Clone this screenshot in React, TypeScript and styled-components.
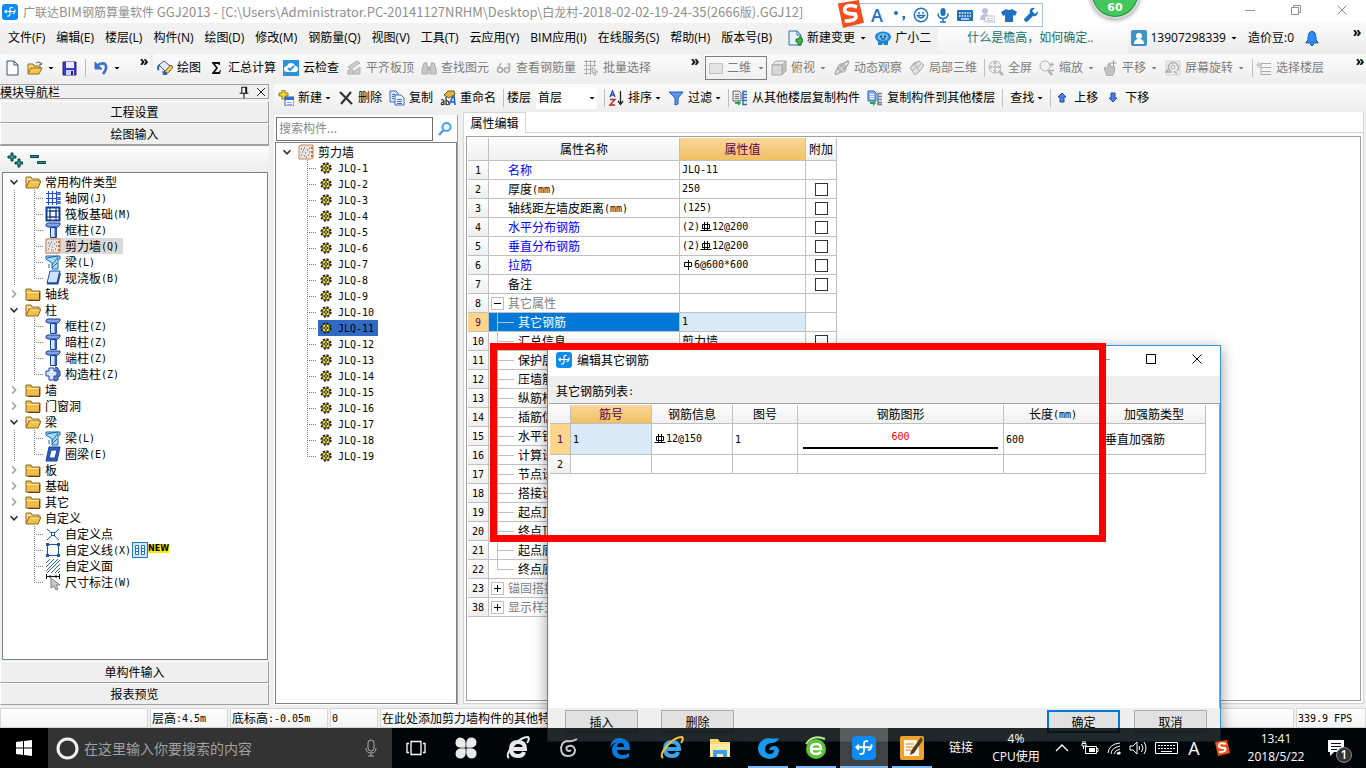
import React from "react";
import styled, { createGlobalStyle, css } from "styled-components";

const UI_FONT = '"Open Sans", "Noto Sans CJK SC", sans-serif';
const SONG_FONT = '"Noto Sans CJK SC", "Liberation Sans", sans-serif';
const LINE = "#c0c0c0";
const EDGE = "#a0a0a0";

const GlobalStyle = createGlobalStyle`
  * { box-sizing: border-box; }
  html, body { margin: 0; height: 100%; background: #000; }
  body { font: 12px/16px ${UI_FONT}; color: #000; overflow: hidden; }
  button, input, select { font: inherit; color: inherit; margin: 0; }
  button { border: 0; padding: 0; background: none; white-space: nowrap; cursor: default; }
  svg { display: block; flex: none; }
`;

/* ---------- icons ---------- */

const shapes: Record<string, React.ReactNode> = {
  doc: <path d="M3 1h7l4 4v10H3z M10 1v4h4" fill="#fff" stroke="#3b5578" />,
  open: (
    <g>
      <path d="M1 13V4h5l1 2h6v3" fill="#f5d67b" stroke="#8a6a1f" />
      <path d="M1 14l3-6h11l-3 6z" fill="#fbc84c" stroke="#8a6a1f" />
      <path d="M9 3q3-2 5 0v2m0 0l-2-1m2 1l1-2" fill="none" stroke="#55697f" />
    </g>
  ),
  save: (
    <g>
      <path d="M1 2h13v13H1z" fill="#3a3ac4" stroke="#24248c" />
      <path d="M4 2h8v6H4z" fill="#e9efff" />
      <path d="M4 10h8v5H4z" fill="#c8d2f0" />
      <path d="M9 11h2v4H9z" fill="#24248c" />
    </g>
  ),
  undo: (
    <g fill="none" stroke="#3c6fd0">
      <path d="M4 6q4-4 8-2 3 4-2 10" strokeWidth="2.600" />
      <path d="M2 2v7h7z" fill="#3c6fd0" />
    </g>
  ),
  paint: (
    <g>
      <path d="M2 5l5-4 6 5-5 5z" fill="#e8eef7" stroke="#33527c" />
      <path d="M2 5q-2 4 0 5" fill="none" stroke="#2f62b4" strokeWidth="2" />
      <path d="M6 13l3 1 3-2 4-5-2-2-5 5z" fill="#f3c95a" stroke="#7a5a1a" />
      <path d="M5 11l5 1v3H6z" fill="#2f62b4" />
    </g>
  ),
  sigma: <path d="M4 2h8v3h-1l-1-1H7l3 4-3 4h4l1-2h1l-1 4H4v-1l4-5-4-5z" fill="#111" />,
  cloud: (
    <g>
      <path d="M0 0h16v16H0z" fill="#2b93dd" />
      <path d="M4 12q-3 0-3-3t3-3q1-3 4-3t4 3q3 0 3 3t-3 3z" fill="#fff" />
      <path d="M5 8l2 2 4-4" fill="none" stroke="#2b93dd" strokeWidth="2" />
    </g>
  ),
  plate: (
    <g fill="#cdcdcd" stroke="#adadad">
      <path d="M2 7l9-6 3 2-9 6z" />
      <path d="M2 10h5v4H2z M7 12l7-5v7H7z" />
    </g>
  ),
  binocular: (
    <g fill="#c8c8c8" stroke="#aaaaaa">
      <path d="M3 3h3v3l1 3v5H1V9z M10 3h3l2 6v5H9V9l1-3z M7 7h2v3H7z" />
    </g>
  ),
  glasses: (
    <g fill="none" stroke="#adadad" strokeWidth="1.500">
      <circle cx="4" cy="10" r="2.500" />
      <circle cx="11" cy="10" r="2.500" />
      <path d="M6.500 10h2M2 9l3-6M13.500 10V4h-2" />
    </g>
  ),
  batch: (
    <g fill="none" stroke="#adadad">
      <path d="M1 1.500h12M1 5.500h12M1 9.500h7M1 13.500h7M3.500 0v15M7.500 0v15M11.500 0v7" />
      <path d="M9 7l6 5h-3l1 3-2 0-1-3-1 1z" fill="#ddd" />
    </g>
  ),
  cube: (
    <g stroke="#a9a9a9">
      <path d="M1 5l4-4h10l-4 4z" fill="#e8e8e8" />
      <path d="M11 5l4-4v10l-4 4z" fill="#c4c4c4" />
      <path d="M1 5h10v10H1z" fill="#d8d8d8" />
    </g>
  ),
  planet: (
    <g>
      <circle cx="8" cy="8" r="5" fill="#c2c2c2" />
      <path d="M1 14Q3 6 14 1q2 2-4 8T1 14" fill="none" stroke="#ababab" strokeWidth="1.500" />
      <path d="M5 6l4 5" stroke="#e3e3e3" />
    </g>
  ),
  part3d: (
    <g fill="#e2e2e2" stroke="#adadad">
      <path d="M1 8l4-5 5-2 5 4-4 6-5 4z" />
      <path d="M5 3l5 8M1 8l9-7M3 11l9-7" fill="none" />
    </g>
  ),
  full: (
    <g fill="none" stroke="#b2b2b2">
      <circle cx="7" cy="7" r="6" fill="#f1f1f1" />
      <path d="M7 2v10M2 7h10M5.500 4L7 2l1.500 2M5.500 10L7 12l1.500-2M4 5.500L2 7l2 1.500M10 5.500L12 7l-2 1.500" />
      <path d="M11 11l4 4" strokeWidth="2.500" />
    </g>
  ),
  zoom: (
    <g fill="none" stroke="#b2b2b2">
      <circle cx="6" cy="6" r="5" fill="#f1f1f1" />
      <path d="M9 10l4 5" strokeWidth="2.500" />
      <path d="M11 4.500h4M13 2.500v4M11 10.500h4" strokeWidth="1.500" />
    </g>
  ),
  hand: (
    <g>
      <path d="M2 8l2-1 2 2V4l2-1 1 4 3-1 1 2-1 5-2 3H5z" fill="#c2c2c2" stroke="#aaa" />
      <path d="M11.500 0v6M8.500 3h6" stroke="#999" />
    </g>
  ),
  rotate: (
    <g fill="none" stroke="#b0b0b0">
      <path d="M1 1h14v14H1z" fill="#ededed" stroke="#d2d2d2" />
      <path d="M4 10a5 5 0 1 1 8 1M1 12l3-3 2 3zM12 14l-3-3" strokeWidth="1.500" />
      <circle cx="8" cy="7" r="2" />
    </g>
  ),
  floors: <path d="M5 3.500h10M5 7.500h10M5 11.500h10M5 14.500h10M1 5h5M3.500 2L1 5l2.500 3M5 3v12" fill="none" stroke="#ababab" />,
  add: (
    <g>
      <path d="M4 0h3v3h3v3H7v3H4V6H1V3h3z" fill="#f7d53c" stroke="#8f7412" />
      <path d="M7 7h9v9H7z" fill="#fff" stroke="#2b5fb5" />
      <path d="M7 7h9v3H7z" fill="#2b6fd6" />
      <path d="M9 12.500h5M9 14.500h5" stroke="#7ea9e4" />
    </g>
  ),
  del: <path d="M2 2l12 12M13 2L3 14" stroke="#333" strokeWidth="2.200" fill="none" />,
  copy: (
    <g stroke="#3a6fb7">
      <path d="M1 1h6l2 2v9H1z" fill="#dce9fb" />
      <path d="M6 5h6l3 3v7H6z" fill="#eef5ff" />
      <path d="M8 9.500h5M8 11.500h5M8 13.500h5M3 4.500h3M3 6.500h2M3 8.500h2" />
    </g>
  ),
  rename: (
    <g>
      <path d="M4 5l4-4h6l1 4-6 3z" fill="#e2b23c" stroke="#75591a" />
      <path d="M1 10q3-1 3 1v4M4 12q-3 0-3 2t3 0M6 7v8M6 11q3-1 3 2t-3 1" fill="none" stroke="#111" />
      <path d="M9 15l4-9h1l1 9M10 12h4" fill="none" stroke="#1f5fc4" strokeWidth="1.600" />
    </g>
  ),
  sort: (
    <g fill="none">
      <path d="M2 7l2.500-6L7 7M3 5h3" stroke="#2451b0" strokeWidth="1.400" />
      <path d="M2 9.500h5L2 15h5" stroke="#b02a2a" strokeWidth="1.400" />
      <path d="M12.500 1v13M10 11l2.500 3.500L15 11" stroke="#222" strokeWidth="1.300" />
    </g>
  ),
  funnel: <path d="M1 2h14L10 8v6l-3 1V8z" fill="#5b94ea" stroke="#2a5cb4" />,
  from: (
    <g>
      <path d="M1 1h6l2 2v8H1z" fill="#e8e8e8" stroke="#666" />
      <path d="M3 4.500h4M3 6.500h4M3 8.500h4" stroke="#777" />
      <path d="M15 1.500h-4v13h4M11 4.500h4M11 7.500h4M11 10.500h4" fill="none" stroke="#2b6bbd" strokeWidth="1.500" />
      <path d="M3 12h3v-2l3 3-3 3v-2H3z" fill="#28a745" />
    </g>
  ),
  to: (
    <g>
      <path d="M1 1h6l2 2v8H1z" fill="#8fb4f5" stroke="#2b5fb5" />
      <path d="M3 4.500h4M3 6.500h4M3 8.500h4" stroke="#fff" />
      <path d="M15 3.500h-4v11h4M11 6.500h4M11 9.500h4M11 12.500h4" fill="none" stroke="#6a7f99" strokeWidth="1.500" />
      <path d="M3 12h3v-2l3 3-3 3v-2H3z" fill="#28a745" />
    </g>
  ),
  up: <path d="M8 3l4 4H10v5H6V7H4z" fill="#4d7fe6" stroke="#1f48a8" />,
  down: <path d="M8 12l4-4H10V3H6v5H4z" fill="#4d7fe6" stroke="#1f48a8" />,
  change: (
    <g>
      <path d="M2 1h8l4 4v10H2z" fill="#e6f3fb" stroke="#2476a8" />
      <path d="M10 1v4h4" fill="none" stroke="#2476a8" />
      <path d="M9 9h3V7h2v2h2v3h-2v3h-3v-3H9z" fill="#4bb548" stroke="#1d7a1f" />
    </g>
  ),
  robot: (
    <g>
      <path d="M3 9h10v6H9l-1-2-1 2H3z" fill="#1c83d6" />
      <ellipse cx="8" cy="7" rx="8" ry="5.500" fill="#1c83d6" />
      <ellipse cx="8" cy="7" rx="5.500" ry="3.800" fill="#6cc0f5" />
      <circle cx="6" cy="6.500" r="1" fill="#134" />
      <circle cx="10" cy="6.500" r="1" fill="#134" />
      <path d="M6 8.500q2 1.500 4 0" stroke="#134" fill="none" />
    </g>
  ),
  user: (
    <g>
      <rect width="16" height="16" rx="2" fill="#3d94c9" />
      <circle cx="8" cy="6" r="3" fill="#fff" />
      <path d="M3 14q0-5 5-5t5 5z" fill="#fff" />
    </g>
  ),
  bell: (
    <g fill="#2e8df0" stroke="#1b62b5">
      <path d="M8 1q-4 1-4 6v3l-2 2v1h12v-1l-2-2V7q0-5-4-6z" />
      <path d="M6 14h4l-2 2z" />
    </g>
  ),
  folderOpen: (
    <g>
      <path d="M1 13V3h5l1 2h7v3" fill="#f6dc8d" stroke="#8c6a1b" />
      <path d="M1 14l3-7h12l-3 7z" fill="#f3bf45" stroke="#8c6a1b" />
      <path d="M5 8h9" stroke="#fff0bd" />
    </g>
  ),
  folder: (
    <g>
      <path d="M1 14V3h5l1 2h8v9z" fill="#f0bd4a" stroke="#8c6a1b" />
      <path d="M2 6.500h12" stroke="#fff0bd" />
      <path d="M14.500 6v8.500H3" stroke="#5e4510" fill="none" />
    </g>
  ),
  axis: <path d="M1 3.500h11M1 8.500h11M1 12.500h11M3.500 1v14M7.500 1v14M11.500 1v14M13 2.500h2v2h-2zM13 7.500h2v2h-2zM13 11.500h2v2h-2z" stroke="#2a4fc0" strokeWidth="1.200" fill="none" />,
  raft: (
    <g fill="none" stroke="#123f8c">
      <path d="M1.500 1.500h13v13h-13z" strokeWidth="2" />
      <path d="M5 5h6v6H5z" strokeWidth="1.500" />
      <path d="M5 1v4M11 1v4M5 11v4M11 11v4M1 5h4M1 11h4M11 5h4M11 11h4" />
    </g>
  ),
  column: (
    <g stroke="#1c3c94">
      <path d="M1 2l2-1h12v2l-2 2H3L1 4z" fill="#7ea4ec" />
      <path d="M5.500 5.500h6v10h-6z" fill="#d6e4ff" />
      <path d="M10.500 6v9" stroke="#2b5fd0" strokeWidth="2" />
    </g>
  ),
  wall: (
    <g>
      <path d="M1 2l2-1h12v13l-2 1H1z" fill="#e9e4e0" stroke="#c98562" />
      <path d="M3 5h1M6 4h1M9 6h1M4 8h1M7 9h1M11 4h1M3 11h1M6 12h1M10 11h1M11 8h1M8 13h1M5 6h1" stroke="#555" />
      <path d="M14 3v11" stroke="#d06a2c" strokeWidth="2" strokeDasharray="2 2" />
    </g>
  ),
  beam: (
    <g stroke="#1766b0">
      <path d="M1 2h14v3h-2v10H7V9L1 5z" fill="#a9dcfa" />
      <path d="M2 4l11-2M7 11l6-8M7 14l5-5M4 10v4" fill="none" />
    </g>
  ),
  slab: (
    <g>
      <path d="M5 1h10l-3 12H2z" fill="#cfe2ff" stroke="#1c4ba5" />
      <path d="M2 13.500h10.500L15 3" fill="none" stroke="#1c4ba5" strokeWidth="2" />
    </g>
  ),
  cross: (
    <g stroke="#1b3f96">
      <path d="M10 1l3 1v2l2 1v5l-2 1v3l-4 1" fill="#5b83d8" />
      <path d="M4 2h5v3h3v5H9v4H4v-4H1V5h3z" fill="#dbe7fd" />
    </g>
  ),
  ring: (
    <g stroke="#173f9c">
      <path d="M4 1h11l-3 14H1z" fill="#2d60c8" />
      <path d="M6 4h6l-2 8H4z" fill="#fff" />
    </g>
  ),
  point: (
    <g stroke="#1b55a5" fill="none">
      <path d="M2 3l12 11M14 3L2 14" />
      <rect x="6.500" y="6.500" width="3" height="3" fill="#fff" />
    </g>
  ),
  line: (
    <g stroke="#1b55a5" fill="#fff">
      <path d="M2.500 2.500h11v11h-11z" />
      <path d="M1 1h3v3H1zM12 1h3v3h-3zM1 12h3v3H1zM12 12h3v3h-3z" fill="#1b55a5" stroke="none" />
    </g>
  ),
  area: <path d="M1 5l4-4M1 9l8-8M1 13l12-12M2 15L15 2M6 15l9-9M10 15l5-5M13 15l2-2" stroke="#2a62b8" fill="none" />,
  dims: (
    <g>
      <path d="M1.500 0v5M14.500 0v5M1 2.500h14M5 1v3M11 1v3" stroke="#111" fill="none" />
      <path d="M6 4l9 7h-4l2 4-2 1-2-4-3 2z" fill="#c9c9c9" stroke="#808080" />
    </g>
  ),
  twin: (
    <g>
      <path d="M0.500 0.500h15v15h-15z" fill="#cfe8fd" stroke="#2572bd" />
      <path d="M3.500 3.500h3v9h-3zM9.500 3.500h3v9h-3z" fill="#fff" stroke="#2572bd" />
      <path d="M3 6.500h4M3 9.500h4M9 6.500h4M9 9.500h4" stroke="#2572bd" />
    </g>
  ),
  gear: (
    <g>
      <circle cx="8" cy="8" r="4.500" fill="none" stroke="#222" strokeWidth="2.400" strokeDasharray="2 1.530" />
      <circle cx="8" cy="8" r="4" fill="#f2e60a" stroke="#333" strokeWidth="0.800" />
      <path d="M8 4v8M4 8h8" stroke="#222" strokeWidth="0.800" />
      <circle cx="8" cy="8" r="1.400" fill="#fff" stroke="#222" />
    </g>
  ),
  lens: (
    <g fill="none" stroke="#4aa3e6">
      <circle cx="9.500" cy="6" r="4" strokeWidth="2" fill="#e9f5ff" />
      <path d="M6.500 9L2 14" strokeWidth="2.500" />
    </g>
  ),
  glodon: (
    <g>
      <rect width="16" height="16" rx="3" fill="#0d8bf2" />
      <path d="M8 10V5q0-1.800 2.200-1.500M2.800 7.500h9.400q1.200 0 .8-1.500M2.800 7.500l1.500-1.300M2.800 7.500l1.500 1.300M12.500 7.500q.2 1.800-1.500 1.700M8 9.500q0 3-2.500 2.500" fill="none" stroke="#fff" strokeWidth="1.200" strokeLinecap="round" />
    </g>
  ),
  pin: <path d="M5.500 2v7M5 2.500h6M10 2v7M11 2v7M3 9.500h10M8 10v5" stroke="#111" strokeWidth="1.200" fill="none" />,
  close: <path d="M3.500 3.500l9 9M12.500 3.500l-9 9" stroke="currentColor" fill="none" />,
  minimize: <path d="M3 8.500h10" stroke="#999" fill="none" />,
  maximize: <path d="M3.500 3.500h9v9h-9z" stroke="currentColor" fill="none" />,
  restore: <path d="M3.500 5.500h7v7h-7zM5.500 5V3.500h7v7H11" stroke="currentColor" fill="none" />,
  expandAll: <path d="M4 1h2v3h3v2H6v3H4V6H1V4h3z M11 7h2v3h3v2h-3v3h-2v-3H8v-2h3z" stroke="#0a3c38" fill="#1aa79b" />,
  collapseAll: <path d="M0.500 3.500h8v2h-8z M7.500 9.500h8v2h-8z" stroke="#0a3c38" fill="#1aa79b" />,
  down2: <path d="M4 6l4 4 4-4" stroke="#333" strokeWidth="2" fill="none" />,
  right2: <path d="M6 4l4 4-4 4" stroke="#999" strokeWidth="1.600" fill="none" />,
  sogou: (
    <g>
      <path d="M1 2l12-2 3 13-12 3z" fill="#f1501c" />
      <path d="M12 4Q6 2 5 5t6 3q2 4-6 4" fill="none" stroke="#fff" strokeWidth="2" />
    </g>
  ),
  smile: (
    <g fill="none" stroke="#2070c0" strokeWidth="1.400">
      <circle cx="8" cy="8" r="6.700" />
      <path d="M4.500 8.500q3.500 5 7 0zM6 5v2M10 5v2" />
    </g>
  ),
  mic: (
    <g>
      <rect x="5.500" y="1" width="5" height="8" rx="2.500" fill="#2070c0" />
      <path d="M3 6.500q0 5 5 5t5-5M8 11v4M5 15h6" fill="none" stroke="#2070c0" strokeWidth="1.500" />
    </g>
  ),
  keys: (
    <g>
      <rect x="0" y="3" width="16" height="11" rx="1" fill="#2070c0" />
      <path d="M2 6h12M2 9h12" stroke="#fff" strokeWidth="1.500" strokeDasharray="1.500 1.200" />
      <path d="M4 12h8" stroke="#fff" strokeWidth="1.300" />
    </g>
  ),
  card: (
    <g fill="#b9c2d6">
      <circle cx="6" cy="4" r="3" />
      <path d="M1 13q0-6 5-6 3 0 4 2v4z" />
      <path d="M6 9h10v6H6z" fill="#fff" stroke="#b9c2d6" />
      <path d="M8 11.500h3M12 11.500h2M8 13.500h6" stroke="#b9c2d6" />
    </g>
  ),
  shirt: <path d="M5 2q3 2 6 0l5 3-2 4-2-1v7H4V8L2 9 0 5z" fill="#2070c0" />,
  wrench: <path d="M15 4l-3 3-3-3 3-3q-4-1-5 2-1 2 0 3L1 12q0 3 3 3l6-6q5 1 5-5z" fill="#2070c0" />,
  punct: (
    <g fill="#2070c0">
      <circle cx="5" cy="6" r="2" />
      <path d="M11 9h3q1 4-3 5 2-2 0-5z" />
    </g>
  ),
};

const Icon = ({ name, size = 16 }: { name: string; size?: number }) => (
  <svg width={size} height={size} viewBox="0 0 16 16" aria-hidden="true">
    {shapes[name]}
  </svg>
);

const splitLatin = (text: string, Part: React.ElementType) =>
  text.split(/([\x20-\x7e]+)/).map((part, i) => (i % 2 ? <Part key={i}>{part}</Part> : part));

/* Latin runs keep the half-width rhythm of the grid font. */
const Latin = styled.span`
  font-family: "DejaVu Sans Mono", monospace;
  font-size: 10px;
  line-height: 10px;
  vertical-align: 1px;
  white-space: pre;
`;

const Song = ({ children }: { children: string }) => <>{splitLatin(children, Latin)}</>;

/* ---------- window frame ---------- */

const Window = styled.div`
  position: relative;
  display: flex;
  flex-direction: column;
  height: 100vh;
  overflow: hidden;
`;

const TitleBar = styled.header`
  display: flex;
  align-items: center;
  flex: none;
  height: 23px;
  padding: 0 16px 0 2px;
  background: #fff;
  color: #8f8f8f;
  font-family: "Noto Sans CJK SC", sans-serif;
`;

const TitleText = styled.h1`
  flex: 1;
  margin: 0 0 0 5px;
  font-size: 12px;
  font-weight: 400;
  line-height: 20px;
  white-space: nowrap;
`;

const TitleLatin = styled.span`
  font-size: 13px;
  line-height: 16px;
`;

const WindowButtons = styled.div`
  display: flex;
  gap: 30px;
  padding-bottom: 3px;
`;

const MenuBar = styled.nav`
  display: flex;
  align-items: center;
  flex: none;
  height: 30px;
  padding-left: 8px;
  background: linear-gradient(#f2f2f2, #efefef);
`;

const MenuList = styled.div`
  display: flex;
  gap: 11px;
`;

const MenuExtras = styled.div`
  display: flex;
  align-items: center;
  gap: 8px;
  margin-left: 15px;
`;

const News = styled.a`
  flex: 1;
  align-self: stretch;
  padding-left: 29px;
  margin-left: 7px;
  background: linear-gradient(#fff, #f2f2f2);
  color: #1a6f6b;
  line-height: 30px;
  text-decoration: none;
  white-space: nowrap;
`;

const Account = styled.div`
  display: flex;
  align-items: center;
  align-self: stretch;
  gap: 10px;
  padding: 0 3px;
  background: linear-gradient(#fafafa, #ececec);
`;

const MoreButton = styled.button<{ $far?: boolean }>`
  align-self: flex-start;
  width: 12px;
  margin-left: ${(p) => (p.$far ? "21px" : "auto")};
  padding-top: ${(p) => (p.$far ? 2 : 0)}px;
  font-size: 14px;
  font-weight: 700;
  line-height: 14px;
`;
const More = ({ far }: { far?: boolean }) => <MoreButton $far={far}>»</MoreButton>;

const Caret = styled.i<{ $wide?: boolean }>`
  flex: none;
  width: 6px;
  height: 3px;
  margin: ${(p) => (p.$wide ? "0 1px 0 5px" : "0 0 0 3px")};
  background: currentColor;
  clip-path: polygon(0 0, 100% 0, 50% 100%);
`;

const Strip = styled.div`
  display: flex;
  flex: none;
  gap: 3px;
  height: 31px;
  padding: 1px 0 2px;
  background: #efefef;
`;

const ToolGroup = styled.div<{ $basis?: number; $pad?: number }>`
  display: flex;
  align-items: center;
  gap: 7px;
  height: 28px;
  padding-left: ${(p) => p.$pad ?? 4}px;
  flex: ${(p) => (p.$basis ? `0 0 ${p.$basis}px` : "1 0 0")};
  min-width: 0;
  border-radius: 3px;
  background: linear-gradient(#fbfbfb, #eeeeee);
`;

const ToolButton = styled.button<{ $dim?: boolean; $bare?: boolean }>`
  display: flex;
  align-items: center;
  height: 22px;
  padding-left: ${(p) => (p.$bare ? 4 : 0)}px;
  color: ${(p) => (p.$dim ? "#7c7c7c" : "#000")};
  & > svg + span { margin-left: 4px; }
`;

const Rule = styled.i<{ $wide?: boolean }>`
  flex: none;
  width: 1px;
  height: 18px;
  margin-right: ${(p) => (p.$wide ? 0 : -4)}px;
  background: #bdbdbd;
`;

type ToolProps = { icon?: string; label?: string; caret?: boolean; wide?: boolean; dim?: boolean; title?: string };
const Tool = ({ icon, label, caret, wide, dim, title }: ToolProps) => (
  <ToolButton $dim={dim} $bare={!icon} aria-label={label ?? title}>
    {icon && <Icon name={icon} />}
    {label && <span>{label}</span>}
    {caret && <Caret $wide={wide} />}
  </ToolButton>
);

const selectBase = css`
  appearance: none;
  border: 0;
  border-radius: 0;
  height: 22px;
  line-height: 16px;
  outline: 0;
`;

const ViewPicker = styled.label`
  display: flex;
  align-items: center;
  width: 62px;
  height: 24px;
  margin-right: -3px;
  padding-left: 3px;
  border: 1px solid #7d7d7d;
  color: #7c7c7c;
`;

const ViewSwatch = styled.i`
  flex: none;
  width: 14px;
  height: 11px;
  margin-right: 4px;
  border: 1px solid #c4c4c4;
  background: #e4e4e4;
`;

const ViewSelect = styled.select`
  ${selectBase}
  width: 28px;
  padding: 0;
  background: none;
`;

const FloorPicker = styled.label`
  display: flex;
  align-items: center;
  gap: 5px;
`;

const FloorBox = styled.span`
  display: flex;
  align-items: center;
  width: 61px;
  height: 22px;
  padding-right: 2px;
  background: #fff;
`;

const FloorSelect = styled.select`
  ${selectBase}
  flex: 1;
  min-width: 0;
  padding: 0 2px;
  background: none;
`;

/* ---------- navigation column ---------- */

const Body = styled.main`
  display: flex;
  flex: 1;
  min-height: 0;
  background: #efefef;
`;

const NavColumn = styled.aside`
  display: flex;
  flex-direction: column;
  flex: 0 0 269px;
  font-family: ${SONG_FONT};
`;

const NavHead = styled.div`
  display: flex;
  align-items: center;
  gap: 3px;
  height: 15px;
  margin-bottom: 2px;
  border: 1px solid ${EDGE};
  border-left: 0;
  h2 {
    flex: 1;
    margin: 0;
    font-size: 12px;
    font-weight: 400;
    line-height: 14px;
  }
`;

const NavButton = styled.button`
  height: 22px;
  border: 1px solid ${EDGE};
  border-top-color: #fff;
  border-left-color: #fff;
  line-height: 20px;
  background: #efefef;
`;

const NavTools = styled.div`
  display: flex;
  gap: 7px;
  height: 27px;
  padding: 6px 7px;
  border-top: 1px solid ${EDGE};
  background: linear-gradient(#fdfdfd, #ededed);
`;

const NavTree = styled.ul`
  flex: 1;
  margin: 0 1px 1px 2px;
  padding: 1px 0;
  border: 1px solid #7f8189;
  background: #fff;
  list-style: none;
`;

const dotsV = (x: number, h: string) =>
  `repeating-linear-gradient(to bottom, #808080 0 1px, transparent 1px 2px) ${x}px 0 / 1px ${h} no-repeat`;
const dotsH = (x: number, w: number) =>
  `repeating-linear-gradient(to right, #808080 0 1px, transparent 1px 2px) ${x}px 8px / ${w}px 1px no-repeat`;

const TreeRow = styled.li`
  display: flex;
  align-items: center;
  height: 16px;
  line-height: 16px;
  white-space: nowrap;
`;

const Rail = styled.span<{ $line?: boolean }>`
  display: flex;
  align-items: center;
  justify-content: center;
  flex: 0 0 22px;
  height: 16px;
  background: ${(p) => (p.$line ? dotsV(11, "16px") : "none")};
`;

const Branch = styled.span<{ $last?: boolean; $w: number }>`
  flex: 0 0 ${(p) => p.$w}px;
  height: 16px;
  background: ${(p) => dotsV(9, p.$last ? "8px" : "16px")}, ${(p) => dotsH(9, p.$w - 10)};
`;

const TreeHit = styled.span<{ $tone?: string }>`
  display: flex;
  align-items: center;
  background: ${(p) => p.$tone ?? "none"};
`;

const TreeLabel = styled.span<{ $tight?: boolean }>`
  padding: 0 ${(p) => (p.$tight ? 1 : 4)}px 0 4px;
`;

const NewTag = styled.b`
  margin-bottom: 4px;
  background: #ffe800;
  font: 700 8px/9px "DejaVu Sans", sans-serif;
`;

type Leaf = { icon: string; text: string; active?: boolean; fresh?: boolean };
type Group = { text: string; items?: Leaf[] };
const groups: Group[] = [
  {
    text: "常用构件类型",
    items: [
      { icon: "axis", text: "轴网(J)" },
      { icon: "raft", text: "筏板基础(M)" },
      { icon: "column", text: "框柱(Z)" },
      { icon: "wall", text: "剪力墙(Q)", active: true },
      { icon: "beam", text: "梁(L)" },
      { icon: "slab", text: "现浇板(B)" },
    ],
  },
  { text: "轴线" },
  {
    text: "柱",
    items: [
      { icon: "column", text: "框柱(Z)" },
      { icon: "column", text: "暗柱(Z)" },
      { icon: "column", text: "端柱(Z)" },
      { icon: "cross", text: "构造柱(Z)" },
    ],
  },
  { text: "墙" },
  { text: "门窗洞" },
  {
    text: "梁",
    items: [
      { icon: "beam", text: "梁(L)" },
      { icon: "ring", text: "圈梁(E)" },
    ],
  },
  { text: "板" },
  { text: "基础" },
  { text: "其它" },
  {
    text: "自定义",
    items: [
      { icon: "point", text: "自定义点" },
      { icon: "line", text: "自定义线(X)", fresh: true },
      { icon: "area", text: "自定义面" },
      { icon: "dims", text: "尺寸标注(W)" },
    ],
  },
];

/* ---------- workspace ---------- */

const Workspace = styled.section`
  display: flex;
  flex-direction: column;
  flex: 1;
  min-width: 0;
  margin-left: 5px;
`;

const Panes = styled.div`
  display: flex;
  flex: 1;
  min-height: 0;
  gap: 5px;
`;

const ListPane = styled.div`
  display: flex;
  flex-direction: column;
  flex: 0 0 184px;
  margin-top: 3px;
  padding-left: 1px;
  border-right: 1px solid ${EDGE};
  background: #fff;
  font-family: ${SONG_FONT};
`;

const SearchRow = styled.form`
  display: flex;
  align-items: center;
  gap: 4px;
  height: 27px;
  padding-left: 1px;
`;

const SearchInput = styled.input`
  width: 157px;
  height: 24px;
  padding: 0 2px 2px;
  border: 1px solid #707070;
  border-radius: 0;
  background: #fff;
  &::placeholder { color: #8a8a8a; opacity: 1; }
`;

const ListTree = styled.ul`
  flex: 1;
  margin: 0 0 1px;
  padding: 1px 0;
  border: 1px solid #7f8189;
  list-style: none;
`;

const PropPane = styled.div`
  display: flex;
  flex-direction: column;
  flex: 1;
  min-width: 0;
  margin: 0 2px 1px 0;
  border: 1px solid #d4d4d4;
  border-top: 0;
  background: #fff;
  font-family: ${SONG_FONT};
`;

const TabLine = styled.div`
  display: flex;
  height: 21px;
  &::after {
    content: "";
    flex: 1;
    border-bottom: 1px solid #d4d4d4;
  }
`;

const Tab = styled.button`
  width: 62px;
  border: 1px solid #d4d4d4;
  border-width: 1px 1px 0 0;
  line-height: 18px;
`;

const GridBox = styled.div`
  flex: 1;
  min-height: 0;
  margin: 3px 2px 2px;
  padding: 1px;
  border: 1px solid ${EDGE};
  overflow: hidden;
`;

const Grid = styled.table`
  border-collapse: separate;
  border-spacing: 0;
  table-layout: fixed;
  width: 0;
  font-family: ${SONG_FONT};
  font-size: 12px;
  line-height: 16px;
`;

const cell = css`
  padding: 0 2px;
  border: solid ${LINE};
  border-width: 0 1px 1px 0;
  font-weight: 400;
  white-space: nowrap;
  overflow: hidden;
`;

const ColHead = styled.th<{ $hot?: boolean; $h: number }>`
  ${cell}
  height: ${(p) => p.$h}px;
  text-align: center;
  background: ${(p) => (p.$hot ? "linear-gradient(#f9d79b, #f1c062)" : "linear-gradient(#fdfdfd, #f0f0f0)")};
  color: ${(p) => (p.$hot ? "#5a0050" : "#000")};
`;

const RowHead = styled.th<{ $hot?: boolean; $h?: number }>`
  ${cell}
  height: ${(p) => p.$h ?? 19}px;
  padding: 0;
  text-align: center;
  background: ${(p) => (p.$hot ? "#ffd58c" : "linear-gradient(#fdfdfd, #efefef)")};
  color: ${(p) => (p.$hot ? "#5a0050" : "#000")};
`;

const Cell = styled.td<{ $tone?: string; $center?: boolean }>`
  ${cell}
  background: ${(p) => p.$tone ?? "#fff"};
  text-align: ${(p) => (p.$center ? "center" : "left")};
`;

const NameCell = styled(Cell)<{ $ink?: string }>`
  padding: 0;
  color: ${(p) => p.$ink ?? "#000"};
`;

const NameInner = styled.div`
  display: flex;
  align-items: center;
  height: 18px;
`;

const NameLead = styled.span<{ $kind?: "branch" | "end" | "box" }>`
  display: flex;
  align-items: center;
  flex: 0 0 ${(p) => (p.$kind === "branch" || p.$kind === "end" ? 29 : 19)}px;
  height: 18px;
  padding-left: 2px;
  ${(p) =>
    (p.$kind === "branch" || p.$kind === "end") &&
    css`
      background: linear-gradient(${LINE}, ${LINE}) 8px 0 / 1px ${p.$kind === "end" ? 9 : 18}px no-repeat,
        linear-gradient(${LINE}, ${LINE}) 8px 9px / 17px 1px no-repeat;
    `}
`;

const Toggle = styled.button`
  width: 13px;
  height: 13px;
  border: 1px solid ${LINE};
  background: linear-gradient(#000, #000) 2px 5px / 7px 1px no-repeat, #fff;
  &[aria-expanded="false"] {
    background: linear-gradient(#000, #000) 2px 5px / 7px 1px no-repeat,
      linear-gradient(#000, #000) 5px 2px / 1px 7px no-repeat, #fff;
  }
`;

const Tick = styled.input`
  appearance: none;
  display: block;
  width: 13px;
  height: 13px;
  margin: 0 auto;
  border: 1px solid #333;
  background: #fff;
`;

const ValueLine = styled.span`
  display: flex;
  align-items: center;
`;

const Rebar = ({ grade = 3 }: { grade?: number }) => (
  <svg width="12" height="12" viewBox="0 0 12 12" role="img" aria-label="钢筋">
    <g fill="none" stroke="#000">
      {grade === 3 ? (
        <path d="M2.500 3.500h7v4h-7zM4.500 1v9M7.500 1v9M0.500 9.500h11" />
      ) : (
        <path d="M2.500 3.500h7v4h-7zM6.500 1v10" />
      )}
    </g>
  </svg>
);

type Prop = {
  n: number;
  name: string;
  value?: string;
  bar?: number;
  tail?: string;
  tick?: boolean;
  kind?: "branch" | "end" | "box";
  open?: boolean;
  ink?: string;
  selected?: boolean;
};
const BLUE = "#0000ff";
const GREY = "#808080";
const props: Prop[] = [
  { n: 1, name: "名称", value: "JLQ-11", ink: BLUE },
  { n: 2, name: "厚度(mm)", value: "250", tick: true },
  { n: 3, name: "轴线距左墙皮距离(mm)", value: "(125)", tick: true },
  { n: 4, name: "水平分布钢筋", value: "(2)", bar: 3, tail: "12@200", tick: true, ink: BLUE },
  { n: 5, name: "垂直分布钢筋", value: "(2)", bar: 3, tail: "12@200", tick: true, ink: BLUE },
  { n: 6, name: "拉筋", bar: 1, tail: "6@600*600", tick: true, ink: BLUE },
  { n: 7, name: "备注", tick: true },
  { n: 8, name: "其它属性", kind: "box", open: true, ink: GREY },
  { n: 9, name: "其它钢筋", value: "1", kind: "branch", selected: true, ink: "#fff" },
  { n: 10, name: "汇总信息", value: "剪力墙", kind: "branch", tick: true },
  { n: 11, name: "保护层", kind: "branch", tick: true },
  { n: 12, name: "压墙筋", kind: "branch", tick: true },
  { n: 13, name: "纵筋构", kind: "branch", tick: true },
  { n: 14, name: "插筋信", kind: "branch", tick: true },
  { n: 15, name: "水平钢", kind: "branch", tick: true },
  { n: 16, name: "计算设", kind: "branch" },
  { n: 17, name: "节点设", kind: "branch" },
  { n: 18, name: "搭接设", kind: "branch" },
  { n: 19, name: "起点顶", kind: "branch", tick: true },
  { n: 20, name: "终点顶", kind: "branch", tick: true },
  { n: 21, name: "起点底", kind: "branch", tick: true },
  { n: 22, name: "终点底", kind: "end", tick: true },
  { n: 23, name: "锚固搭接", kind: "box", open: false, ink: GREY },
  { n: 38, name: "显示样式", kind: "box", open: false, ink: GREY },
];

const PropertyTable = () => (
  <Grid>
    <colgroup>
      {[21, 191, 126, 31].map((w) => (
        <col key={w} style={{ width: w }} />
      ))}
    </colgroup>
    <thead>
      <tr>
        <ColHead $h={23} />
        <ColHead $h={23}>属性名称</ColHead>
        <ColHead $h={23} $hot>属性值</ColHead>
        <ColHead $h={23}>附加</ColHead>
      </tr>
    </thead>
    <tbody>
      {props.map((p) => (
        <tr key={p.n}>
          <RowHead $hot={p.selected}>
            <Song>{String(p.n)}</Song>
          </RowHead>
          <NameCell $ink={p.ink} $tone={p.selected ? "#0078d7" : undefined}>
            <NameInner>
              <NameLead $kind={p.kind}>
                {p.kind === "box" && <Toggle aria-label={p.name} aria-expanded={p.open} />}
              </NameLead>
              <span>
                <Song>{p.name}</Song>
              </span>
            </NameInner>
          </NameCell>
          <Cell $tone={p.selected ? "#d8e9f8" : undefined}>
            <ValueLine>
              {p.value && <Song>{p.value}</Song>}
              {p.bar && <Rebar grade={p.bar} />}
              {p.tail && <Song>{p.tail}</Song>}
            </ValueLine>
          </Cell>
          <Cell $center>{p.tick && <Tick type="checkbox" aria-label={`${p.name} 附加`} />}</Cell>
        </tr>
      ))}
    </tbody>
  </Grid>
);

/* ---------- dialog ---------- */

const Dialog = styled.section`
  position: absolute;
  left: 547px;
  top: 345px;
  z-index: 1;
  display: flex;
  flex-direction: column;
  width: 674px;
  height: 397px;
  border: 1px solid #3a90e5;
  background: #efefef;
  box-shadow: 0 4px 14px rgba(0, 0, 0, 0.4);
  font-family: ${SONG_FONT};
`;

const DialogHead = styled.header`
  display: flex;
  align-items: center;
  height: 30px;
  padding: 0 15px 2px 8px;
  background: #fff;
  h2 {
    flex: 1;
    margin: 0 0 0 5px;
    font-size: 12px;
    font-weight: 400;
  }
`;

const DialogLabel = styled.p`
  height: 27px;
  margin: 0;
  padding-left: 8px;
  line-height: 30px;
`;

const DialogGrid = styled.div`
  flex: 1;
  padding: 1px;
  margin-left: 1px;
  border: 1px solid ${EDGE};
  border-width: 1px 1px 0 0;
  background: #fff;
`;

const BarShape = styled.div`
  display: flex;
  flex-direction: column;
  align-items: stretch;
  height: 30px;
  padding: 4px 3px 0;
  color: #f00;
  line-height: 16px;
  text-align: center;
  &::after {
    content: "";
    height: 2px;
    margin-top: 3px;
    background: #000;
  }
`;

const DialogFoot = styled.footer`
  display: flex;
  justify-content: space-between;
  height: 33px;
  padding: 2px 13px 0 17px;
`;

const ButtonPair = styled.div<{ $gap: number }>`
  display: flex;
  gap: ${(p) => p.$gap}px;
`;

const DialogButton = styled.button<{ $main?: boolean }>`
  width: 73px;
  height: 23px;
  border: ${(p) => (p.$main ? "2px solid #0078d7" : "1px solid #adadad")};
  background: #e1e1e1;
  line-height: 19px;
`;

const RedFrame = styled.div`
  position: absolute;
  left: 490px;
  top: 343px;
  z-index: 2;
  width: 616px;
  height: 199px;
  border: 7px solid #f00;
  pointer-events: none;
`;

/* ---------- status and task bars ---------- */

const StatusBar = styled.footer`
  display: flex;
  flex: none;
  gap: 2px;
  height: 23px;
  padding-top: 3px;
  background: #efefef;
  font-family: ${SONG_FONT};
`;

const StatusCell = styled.span<{ $w?: number }>`
  flex: ${(p) => (p.$w ? `0 0 ${p.$w}px` : "1 1 0")};
  min-width: 0;
  height: 20px;
  padding-left: 1px;
  border: 1px solid #d6d6d6;
  background: linear-gradient(#fff, #f3f3f3);
  line-height: 18px;
  white-space: nowrap;
  overflow: hidden;
`;

const TaskBar = styled.footer`
  position: relative;
  z-index: 3;
  display: flex;
  flex: none;
  height: 40px;
  background: rgba(0, 6, 8, 0.86);
  color: #fff;
`;

const TaskItem = styled.button<{ $w: number; $run?: boolean; $active?: boolean }>`
  display: flex;
  align-items: center;
  justify-content: center;
  flex: 0 0 ${(p) => p.$w}px;
  color: #fff;
  background: ${(p) => (p.$active ? "rgba(255,255,255,.25)" : "none")};
  ${(p) =>
    p.$run &&
    css`
      background-image: linear-gradient(#76b9ff, #76b9ff);
      background-repeat: no-repeat;
      background-position: 50% 100%;
      background-size: ${p.$active ? 48 : 40}px 2px;
    `}
`;

const StartButton = styled(TaskItem)`
  background: #000;
`;

const TaskSearch = styled.label`
  display: flex;
  align-items: center;
  flex: 0 0 344px;
  padding: 0 13px 0 8px;
  background: #333;
`;

const TaskInput = styled.input`
  flex: 1;
  min-width: 0;
  margin-left: 5px;
  padding: 0;
  border: 0;
  background: none;
  font-family: "Noto Sans CJK SC", sans-serif;
  font-size: 14px;
  &::placeholder { color: #a0a0a0; opacity: 1; }
`;

const Tray = styled.div`
  display: flex;
  margin-left: auto;
  padding-right: 8px;
`;

const TrayText = styled.span<{ $w: number }>`
  display: flex;
  flex-direction: column;
  align-items: center;
  justify-content: center;
  width: ${(p) => p.$w}px;
  line-height: 18px;
  white-space: nowrap;
`;

const TrayLetter = styled.span`
  font-size: 18px;
`;

const Notice = styled.span`
  position: relative;
`;

const NoticeCount = styled.b`
  position: absolute;
  left: 9px;
  top: 8px;
  width: 16px;
  height: 16px;
  border: 1px solid #888;
  border-radius: 8px;
  background: #333;
  font: 600 12px/14px ${UI_FONT};
`;

/* ---------- floating widgets ---------- */

const ImeBar = styled.div`
  position: absolute;
  left: 850px;
  top: 3px;
  z-index: 2;
  display: flex;
  align-items: center;
  gap: 6px;
  width: 193px;
  height: 24px;
  padding-left: 18px;
  border: 1px solid #a9c1dc;
  background: #fff;
  color: #2070c0;
`;

const ImeLogo = styled.span`
  position: absolute;
  left: -15px;
  top: -4px;
`;

const ImeLetter = styled.b`
  width: 16px;
  font: 600 18px/20px "Open Sans", sans-serif;
  text-align: center;
`;

const Ball = styled.div`
  position: absolute;
  left: 1090px;
  top: -31px;
  z-index: 2;
  width: 50px;
  height: 50px;
  padding-top: 30px;
  border: 2px solid #d7d7d7;
  border-radius: 25px;
  background: #43c65a;
  box-shadow: inset 0 0 0 1px #1d8f35, 0 1px 4px rgba(0, 0, 0, 0.4);
  color: #fff;
  font: 700 11px/13px "DejaVu Sans", sans-serif;
  text-align: center;
`;

const menus = [
  "文件(F)", "编辑(E)", "楼层(L)", "构件(N)", "绘图(D)", "修改(M)", "钢筋量(Q)", "视图(V)",
  "工具(T)", "云应用(Y)", "BIM应用(I)", "在线服务(S)", "帮助(H)", "版本号(B)",
];

const windowTitle =
  "广联达BIM钢筋算量软件 GGJ2013 - [C:\\Users\\Administrator.PC-20141127NRHM\\Desktop\\白龙村-2018-02-02-19-24-35(2666版).GGJ12]";

const taskSvg = {
  win: (
    <svg width="16" height="16" viewBox="0 0 16 16">
      <path d="M0 2l7-1v6.500H0zM8 1l8-1v7.500H8zM0 8.500h7V15l-7-1zM8 8.500h8V16l-8-1z" fill="#fff" />
    </svg>
  ),
  ring: (
    <svg width="23" height="23" viewBox="0 0 23 23">
      <circle cx="11.500" cy="11.500" r="9.500" fill="none" stroke="#f2f2f2" strokeWidth="3" />
    </svg>
  ),
  mic: (
    <svg width="16" height="18" viewBox="0 0 16 18">
      <path d="M8 1q3 0 3 3v5q0 3-3 3t-3-3V4q0-3 3-3zM3 9q0 5 5 5t5-5M8 14v3M5 17h6" fill="none" stroke="#aaa" />
    </svg>
  ),
  view: (
    <svg width="20" height="16" viewBox="0 0 20 16">
      <path d="M5 1.500h10v13H5zM3 3.500H1v9h2M17 3.500h2v9h-2" fill="none" stroke="#fff" strokeWidth="1.300" />
    </svg>
  ),
  fan: (
    <svg width="24" height="24" viewBox="0 0 24 24" fill="#e9e9e9">
      {[0, 90, 180, 270].map((a) => (
        <path key={a} d="M11.500 11.500Q3 13 1.500 8 1 2 6 1.500q7 0 5.500 10z" transform={`rotate(${a} 12 12)`} />
      ))}
    </svg>
  ),
  e: (color: string, swoosh: string) => (
    <svg width="26" height="26" viewBox="0 0 26 26" fill="none">
      <path d="M7 14h13q0-7-7-7t-7 7q0 7 7 7 5 0 6-4" stroke={color} strokeWidth="4" />
      <path d="M4 23Q0 20 8 11T23 2q2 2-1 6" stroke={swoosh} strokeWidth="2" />
    </svg>
  ),
  g: (color: string, w: number) => (
    <svg width="26" height="26" viewBox="0 0 26 26" fill="none" stroke={color} strokeWidth={w}>
      <path d="M22 4q-5 3-9 2-6 0-7 7 0 8 7 8 7 0 7-6-1-5-6-4-4 1-2 4 2 2 4 0" />
    </svg>
  ),
  gBlue: (
    <svg width="26" height="26" viewBox="0 0 26 26">
      <path d="M24 3q-2 5-8 5-6 1-6 6 0 5 5 5 4 0 4-4h-5q1-4 6-4 4 1 4 5-1 8-10 8-10-1-11-10Q3 5 13 3q6 1 11 0z" fill="#159af0" />
    </svg>
  ),
  edge: (
    <svg width="24" height="24" viewBox="0 0 24 24">
      <path d="M2 11Q4 1 13 2q9 1 9 12H9q0 5 6 5 4 0 6-2v4q-3 2-8 2-9-1-9-9 0-5 5-8-4 1-7 5zm7 0h7q0-4-3-4-4 0-4 4z" fill="#0a78dc" />
    </svg>
  ),
  files: (
    <svg width="24" height="22" viewBox="0 0 24 22">
      <path d="M2 2h8l2 3h10v15H2z" fill="#f7d774" />
      <path d="M2 7h20v13H2z" fill="#fde9a3" />
      <path d="M5 20v-7h14v7h-4v-3H9v3z" fill="#3aa0e0" />
    </svg>
  ),
  green: (
    <svg width="26" height="26" viewBox="0 0 26 26" fill="none">
      <circle cx="13" cy="14" r="10" fill="#5cc43a" />
      <path d="M8 14h10q0-5-5-5t-5 5q0 5 5 5 3 0 5-2" stroke="#fff" strokeWidth="2.500" />
      <path d="M3 9Q10-1 22 4" stroke="#b9f08e" strokeWidth="2" />
    </svg>
  ),
  note: (
    <svg width="26" height="26" viewBox="0 0 26 26">
      <rect x="1" y="1" width="24" height="24" rx="2" fill="#f0a32a" />
      <path d="M5 5h12l3 3v13H5z" fill="#fff8e4" />
      <path d="M7 9h8M7 12h8M7 15h5" stroke="#c58a2a" />
      <path d="M22 2l2 3-9 13-4 2 1-4z" fill="#5a3a12" />
    </svg>
  ),
  chevron: (
    <svg width="14" height="10" viewBox="0 0 14 10">
      <path d="M1 8l6-6 6 6" fill="none" stroke="#fff" strokeWidth="1.300" />
    </svg>
  ),
  battery: (
    <svg width="18" height="16" viewBox="0 0 18 16">
      <path d="M4.500 6.500h11v7h-11zM16 8.500h1v3h-1M2.500 9V6M1 3.500h4V6H1zM2 1v3M4 1v3" fill="none" stroke="#fff" />
      <path d="M8 8h6v4H8z" fill="#fff" />
    </svg>
  ),
  wifi: (
    <svg width="16" height="16" viewBox="0 0 16 16" fill="none" stroke="#fff">
      <path d="M2 13Q3 4 14 3M5 14q0-6 9-8M8 14q1-4 6-5" />
      <path d="M11 14q0-2 3-2v2z" fill="#fff" />
    </svg>
  ),
  sound: (
    <svg width="18" height="14" viewBox="0 0 18 14" fill="none" stroke="#fff">
      <path d="M1 5h3l4-4v12L4 9H1zM10 5q1 2 0 4M12.500 3q3 4 0 8M15 1q4 6 0 12" />
    </svg>
  ),
  keyboard: (
    <svg width="23" height="14" viewBox="0 0 23 14" fill="none" stroke="#fff">
      <path d="M0.500 1.500h22v11h-22z" />
      <path d="M3 4.500h17M3 7.500h17" strokeDasharray="2 1" />
      <path d="M6 10.500h11" />
    </svg>
  ),
  notice: (
    <svg width="18" height="18" viewBox="0 0 18 18">
      <path d="M1 1h16v12H7l-4 4v-4H1z" fill="#fff" />
      <path d="M4 4.500h10M4 7.500h10M4 10.500h6" stroke="#111" />
    </svg>
  ),
};

const dialogColumns = [
  { id: "row", w: 21 },
  { id: "no", w: 81 },
  { id: "info", w: 81 },
  { id: "figure", w: 65 },
  { id: "shape", w: 206 },
  { id: "length", w: 99 },
  { id: "type", w: 103 },
];

const DialogTable = () => (
  <Grid>
    <colgroup>
      {dialogColumns.map((c) => (
        <col key={c.id} style={{ width: c.w }} />
      ))}
    </colgroup>
    <thead>
      <tr>
        <ColHead $h={19} />
        <ColHead $h={19} $hot>筋号</ColHead>
        <ColHead $h={19}>钢筋信息</ColHead>
        <ColHead $h={19}>图号</ColHead>
        <ColHead $h={19}>钢筋图形</ColHead>
        <ColHead $h={19}><Song>长度(mm)</Song></ColHead>
        <ColHead $h={19}>加强筋类型</ColHead>
      </tr>
    </thead>
    <tbody>
      <tr>
        <RowHead $hot $h={31}><Song>1</Song></RowHead>
        <Cell $tone="#d8e9f8"><Song>1</Song></Cell>
        <Cell>
          <ValueLine>
            <Rebar />
            <Song>12@150</Song>
          </ValueLine>
        </Cell>
        <Cell><Song>1</Song></Cell>
        <Cell>
          <BarShape><span><Song>600</Song></span></BarShape>
        </Cell>
        <Cell><Song>600</Song></Cell>
        <Cell>垂直加强筋</Cell>
      </tr>
      <tr>
        <RowHead><Song>2</Song></RowHead>
        <Cell /><Cell /><Cell /><Cell /><Cell /><Cell />
      </tr>
    </tbody>
  </Grid>
);

export default function App() {
  return (
    <>
      <GlobalStyle />
      <Window>
        <TitleBar>
          <Icon name="glodon" />
          <TitleText>{splitLatin(windowTitle, TitleLatin)}</TitleText>
          <WindowButtons>
            <button aria-label="最小化"><Icon name="minimize" /></button>
            <button aria-label="还原"><Icon name="restore" /></button>
            <button aria-label="关闭"><Icon name="close" /></button>
          </WindowButtons>
        </TitleBar>

        <MenuBar>
          <MenuList>
            {menus.map((m) => (
              <button key={m}>{m}</button>
            ))}
          </MenuList>
          <MenuExtras>
            <Tool icon="change" label="新建变更" caret wide />
            <Tool icon="robot" label="广小二" />
          </MenuExtras>
          <News href="#news">什么是檐高，如何确定..</News>
          <Account>
            <ToolButton>
              <Icon name="user" />
              <span>13907298339</span>
              <Caret $wide />
            </ToolButton>
            <span>造价豆:0</span>
            <button aria-label="消息"><Icon name="bell" /></button>
            <More far />
          </Account>
        </MenuBar>

        <Strip>
          <ToolGroup $basis={150}>
            <Tool icon="doc" title="新建" />
            <Tool icon="open" title="打开" caret wide />
            <Tool icon="save" title="保存" />
            <Rule $wide />
            <Tool icon="undo" title="撤销" caret wide />
            <More />
          </ToolGroup>
          <ToolGroup $basis={548}>
            <Tool icon="paint" label="绘图" />
            <Tool icon="sigma" label="汇总计算" />
            <Tool icon="cloud" label="云检查" />
            <Tool icon="plate" label="平齐板顶" dim />
            <Tool icon="binocular" label="查找图元" dim />
            <Tool icon="glasses" label="查看钢筋量" dim />
            <Tool icon="batch" label="批量选择" dim />
            <More />
          </ToolGroup>
          <ToolGroup $pad={1}>
            <ViewPicker aria-label="视图">
              <ViewSwatch />
              <ViewSelect defaultValue="二维">
                <option>二维</option>
              </ViewSelect>
              <Caret />
            </ViewPicker>
            <Tool icon="cube" label="俯视" caret wide dim />
            <Tool icon="planet" label="动态观察" dim />
            <Tool icon="part3d" label="局部三维" dim />
            <Rule />
            <Tool icon="full" label="全屏" dim />
            <Tool icon="zoom" label="缩放" caret wide dim />
            <Tool icon="hand" label="平移" caret wide dim />
            <Tool icon="rotate" label="屏幕旋转" caret wide dim />
            <Rule />
            <Tool icon="floors" label="选择楼层" dim />
            <More />
          </ToolGroup>
        </Strip>

        <Body>
          <NavColumn>
            <NavHead>
              <h2>模块导航栏</h2>
              <button aria-label="固定"><Icon name="pin" size={14} /></button>
              <button aria-label="关闭"><Icon name="close" size={14} /></button>
            </NavHead>
            <NavButton>工程设置</NavButton>
            <NavButton>绘图输入</NavButton>
            <NavTools>
              <button aria-label="全部展开"><Icon name="expandAll" /></button>
              <button aria-label="全部折叠"><Icon name="collapseAll" /></button>
            </NavTools>
            <NavTree role="tree">
              {groups.map((g, gi) => (
                <React.Fragment key={g.text}>
                  <TreeRow role="treeitem" aria-expanded={!!g.items}>
                    <Rail>
                      <Icon name={g.items ? "down2" : "right2"} size={14} />
                    </Rail>
                    <Icon name={g.items ? "folderOpen" : "folder"} />
                    <TreeLabel>{g.text}</TreeLabel>
                  </TreeRow>
                  {g.items?.map((leaf, i) => (
                    <TreeRow key={leaf.text} role="treeitem" aria-selected={!!leaf.active}>
                      <Rail $line={gi < groups.length - 1} />
                      <Branch $w={20} $last={i === g.items!.length - 1} />
                      <TreeHit $tone={leaf.active ? "#d9d9d9" : undefined}>
                        <Icon name={leaf.icon} />
                        <TreeLabel $tight={leaf.fresh}>
                          <Song>{leaf.text}</Song>
                        </TreeLabel>
                      </TreeHit>
                      {leaf.fresh && (
                        <>
                          <Icon name="twin" />
                          <NewTag>NEW</NewTag>
                        </>
                      )}
                    </TreeRow>
                  ))}
                </React.Fragment>
              ))}
            </NavTree>
            <NavButton>单构件输入</NavButton>
            <NavButton>报表预览</NavButton>
          </NavColumn>

          <Workspace>
            <ToolGroup $pad={4} $basis={28}>
              <Tool icon="add" label="新建" caret />
              <Tool icon="del" label="删除" />
              <Tool icon="copy" label="复制" />
              <Tool icon="rename" label="重命名" />
              <Rule />
              <FloorPicker>
                <span>楼层</span>
                <FloorBox>
                  <FloorSelect defaultValue="首层">
                    <option>首层</option>
                  </FloorSelect>
                  <Caret />
                </FloorBox>
              </FloorPicker>
              <Rule />
              <Tool icon="sort" label="排序" caret />
              <Tool icon="funnel" label="过滤" caret />
              <Rule />
              <Tool icon="from" label="从其他楼层复制构件" />
              <Tool icon="to" label="复制构件到其他楼层" />
              <Rule />
              <Tool label="查找" caret />
              <Rule />
              <Tool icon="up" label="上移" />
              <Tool icon="down" label="下移" />
            </ToolGroup>
            <Panes>
              <ListPane>
                <SearchRow>
                  <SearchInput aria-label="搜索构件" placeholder="搜索构件..." />
                  <button type="button" aria-label="搜索"><Icon name="lens" /></button>
                </SearchRow>
                <ListTree role="tree">
                  <TreeRow role="treeitem" aria-expanded="true">
                    <Rail>
                      <Icon name="down2" size={14} />
                    </Rail>
                    <Icon name="wall" />
                    <TreeLabel>剪力墙</TreeLabel>
                  </TreeRow>
                  {Array.from({ length: 19 }, (_, i) => (
                    <TreeRow key={i} role="treeitem" aria-selected={i === 10}>
                      <Rail />
                      <Branch $w={20} $last={i === 18} />
                      <TreeHit $tone={i === 10 ? "#316ac5" : undefined}>
                        <Icon name="gear" />
                        <TreeLabel>
                          <Song>{`JLQ-${i + 1}`}</Song>
                        </TreeLabel>
                      </TreeHit>
                    </TreeRow>
                  ))}
                </ListTree>
              </ListPane>
              <PropPane>
                <TabLine>
                  <Tab>属性编辑</Tab>
                </TabLine>
                <GridBox>
                  <PropertyTable />
                </GridBox>
              </PropPane>
            </Panes>
          </Workspace>
        </Body>

        <StatusBar>
          <StatusCell $w={148} />
          <StatusCell $w={78}><Song>层高:4.5m</Song></StatusCell>
          <StatusCell $w={98}><Song>底标高:-0.05m</Song></StatusCell>
          <StatusCell $w={48}><Song>0</Song></StatusCell>
          <StatusCell>在此处添加剪力墙构件的其他特</StatusCell>
          <StatusCell $w={70}><Song>339.9 FPS</Song></StatusCell>
        </StatusBar>

        <TaskBar>
          <StartButton $w={48} aria-label="开始">{taskSvg.win}</StartButton>
          <TaskSearch>
            {taskSvg.ring}
            <TaskInput aria-label="搜索" placeholder="在这里输入你要搜索的内容" />
            {taskSvg.mic}
          </TaskSearch>
          <TaskItem $w={48} aria-label="任务视图">{taskSvg.view}</TaskItem>
          <TaskItem $w={52} aria-label="风扇">{taskSvg.fan}</TaskItem>
          <TaskItem $w={52} aria-label="浏览器">{taskSvg.e("#e9e9e9", "#e9e9e9")}</TaskItem>
          <TaskItem $w={48} aria-label="广联达">{taskSvg.g("#c9c9c9", 2)}</TaskItem>
          <TaskItem $w={56} aria-label="Edge">{taskSvg.edge}</TaskItem>
          <TaskItem $w={48} aria-label="Internet Explorer">{taskSvg.e("#38a6ee", "#f2c230")}</TaskItem>
          <TaskItem $w={48} aria-label="文件资源管理器">{taskSvg.files}</TaskItem>
          <TaskItem $w={48} $run aria-label="广联达服务">{taskSvg.gBlue}</TaskItem>
          <TaskItem $w={48} $run aria-label="安全浏览器">{taskSvg.green}</TaskItem>
          <TaskItem $w={48} $run $active aria-label="钢筋算量"><Icon name="glodon" size={24} /></TaskItem>
          <TaskItem $w={48} $run aria-label="记事本">{taskSvg.note}</TaskItem>
          <Tray>
            <TrayText $w={50}>链接</TrayText>
            <TrayText $w={60}>
              <span>4%</span>
              <span>CPU使用</span>
            </TrayText>
            <TaskItem $w={32} aria-label="显示隐藏的图标">{taskSvg.chevron}</TaskItem>
            <TaskItem $w={24} aria-label="电源">{taskSvg.battery}</TaskItem>
            <TaskItem $w={24} aria-label="网络">{taskSvg.wifi}</TaskItem>
            <TaskItem $w={24} aria-label="音量">{taskSvg.sound}</TaskItem>
            <TaskItem $w={32} aria-label="键盘">{taskSvg.keyboard}</TaskItem>
            <TaskItem $w={24}><TrayLetter>A</TrayLetter></TaskItem>
            <TaskItem $w={32} aria-label="搜狗输入法"><Icon name="sogou" /></TaskItem>
            <TrayText $w={76}>
              <span>13:41</span>
              <span>2018/5/22</span>
            </TrayText>
            <TaskItem $w={44} aria-label="通知">
              <Notice>
                {taskSvg.notice}
                <NoticeCount>1</NoticeCount>
              </Notice>
            </TaskItem>
          </Tray>
        </TaskBar>

        <Dialog role="dialog" aria-label="编辑其它钢筋">
          <DialogHead>
            <Icon name="glodon" />
            <h2>编辑其它钢筋</h2>
            <WindowButtons>
              <button aria-label="最小化"><Icon name="minimize" /></button>
              <button aria-label="最大化"><Icon name="maximize" /></button>
              <button aria-label="关闭"><Icon name="close" /></button>
            </WindowButtons>
          </DialogHead>
          <DialogLabel><Song>其它钢筋列表:</Song></DialogLabel>
          <DialogGrid>
            <DialogTable />
          </DialogGrid>
          <DialogFoot>
            <ButtonPair $gap={23}>
              <DialogButton>插入</DialogButton>
              <DialogButton>删除</DialogButton>
            </ButtonPair>
            <ButtonPair $gap={14}>
              <DialogButton $main>确定</DialogButton>
              <DialogButton>取消</DialogButton>
            </ButtonPair>
          </DialogFoot>
        </Dialog>
        <RedFrame />

        <ImeBar>
          <ImeLogo><Icon name="sogou" size={28} /></ImeLogo>
          <ImeLetter>A</ImeLetter>
          <Icon name="punct" />
          <Icon name="smile" />
          <Icon name="mic" />
          <Icon name="keys" />
          <Icon name="card" />
          <Icon name="shirt" />
          <Icon name="wrench" />
        </ImeBar>
        <Ball>60</Ball>
      </Window>
    </>
  );
}
